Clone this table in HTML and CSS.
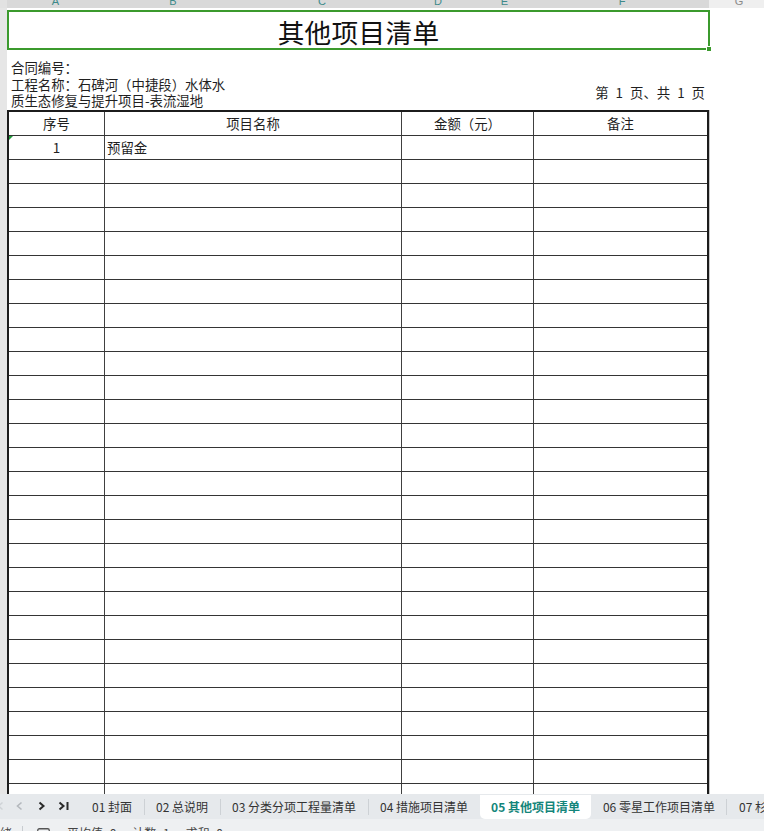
FILE: index.html
```html
<!DOCTYPE html>
<html lang="zh-CN">
<head>
<meta charset="utf-8">
<title>其他项目清单</title>
<link rel="stylesheet" href="styles.css">
</head>
<body>
<div class="app">
  <div class="colhdr">
    <div class="corner"></div>
    <div class="c ca"><span>A</span></div>
    <div class="c cb"><span>B</span></div>
    <div class="c cc"><span>C</span></div>
    <div class="c cd"><span>D</span></div>
    <div class="c ce"><span>E</span></div>
    <div class="c cf"><span>F</span></div>
    <div class="c cg"><span>G</span></div>
  </div>
  <div class="sheet">
    <div class="rowhdr"></div>
    <div class="content">
      <div class="title">其他项目清单<span class="handle"></span></div>
      <div class="meta1">合同编号：</div>
      <div class="meta2">
        <div class="proj">工程名称：石碑河（中捷段）水体水<br>质生态修复与提升项目-表流湿地</div>
        <div class="page">第 1 页、共 1 页</div>
      </div>
      <div class="grid">
        <div class="row head"><div>序号</div><div>项目名称</div><div>金额（元）</div><div>备注</div></div>
        <div class="row"><div class="num mark">1</div><div class="name">预留金</div><div></div><div></div></div>
        <div class="row"><div></div><div></div><div></div><div></div></div>
        <div class="row"><div></div><div></div><div></div><div></div></div>
        <div class="row"><div></div><div></div><div></div><div></div></div>
        <div class="row"><div></div><div></div><div></div><div></div></div>
        <div class="row"><div></div><div></div><div></div><div></div></div>
        <div class="row"><div></div><div></div><div></div><div></div></div>
        <div class="row"><div></div><div></div><div></div><div></div></div>
        <div class="row"><div></div><div></div><div></div><div></div></div>
        <div class="row"><div></div><div></div><div></div><div></div></div>
        <div class="row"><div></div><div></div><div></div><div></div></div>
        <div class="row"><div></div><div></div><div></div><div></div></div>
        <div class="row"><div></div><div></div><div></div><div></div></div>
        <div class="row"><div></div><div></div><div></div><div></div></div>
        <div class="row"><div></div><div></div><div></div><div></div></div>
        <div class="row"><div></div><div></div><div></div><div></div></div>
        <div class="row"><div></div><div></div><div></div><div></div></div>
        <div class="row"><div></div><div></div><div></div><div></div></div>
        <div class="row"><div></div><div></div><div></div><div></div></div>
        <div class="row"><div></div><div></div><div></div><div></div></div>
        <div class="row"><div></div><div></div><div></div><div></div></div>
        <div class="row"><div></div><div></div><div></div><div></div></div>
        <div class="row"><div></div><div></div><div></div><div></div></div>
        <div class="row"><div></div><div></div><div></div><div></div></div>
        <div class="row"><div></div><div></div><div></div><div></div></div>
        <div class="row"><div></div><div></div><div></div><div></div></div>
        <div class="row"><div></div><div></div><div></div><div></div></div>
        <div class="row"><div></div><div></div><div></div><div></div></div>
      </div>
    </div>
  </div>
  <div class="tabs">
    <svg class="nav" width="81" height="25" viewBox="0 0 81 25">
      <polyline points="2.5,8.5 -1.5,12 2.5,15.5" fill="none" stroke="#cfd3d7" stroke-width="1.5"/>
      <polyline points="21.5,8.5 17.5,12 21.5,15.5" fill="none" stroke="#b4b8bd" stroke-width="1.6"/>
      <polyline points="39.5,8.5 43.5,12 39.5,15.5" fill="none" stroke="#2b2b2b" stroke-width="2"/>
      <polyline points="59.5,8.5 63.5,12 59.5,15.5" fill="none" stroke="#2b2b2b" stroke-width="2"/>
      <line x1="67.5" y1="8" x2="67.5" y2="16" stroke="#2b2b2b" stroke-width="2"/>
    </svg>
    <div class="tab">01 封面</div><span class="sep"></span>
    <div class="tab">02 总说明</div><span class="sep"></span>
    <div class="tab">03 分类分项工程量清单</div><span class="sep"></span>
    <div class="tab">04 措施项目清单</div>
    <div class="tab active">05 其他项目清单</div>
    <div class="tab">06 零星工作项目清单</div><span class="sep"></span>
    <div class="tab">07 杉</div>
  </div>
  <div class="status">
    <span class="st-ready">就绪</span>
    <span class="st-sep"></span>
    <svg class="st-icon" width="13" height="12" viewBox="0 0 13 12"><rect x="0.75" y="0.75" width="11.5" height="11" rx="1.5" fill="none" stroke="#555" stroke-width="1.3"/></svg>
    <span class="st-sum first">平均值=0</span>
    <span class="st-sum">计数=1</span>
    <span class="st-sum">求和=0</span>
  </div>
</div>
</body>
</html>
```
FILE: styles.css
```css
* { box-sizing: border-box; }
html, body { margin: 0; padding: 0; }
body {
  width: 764px;
  height: 831px;
  overflow: hidden;
  background: #fff;
  font-family: "Noto Sans CJK SC", "Liberation Sans", sans-serif;
  color: #1f1f1f;
}
.app { display: flex; flex-direction: column; height: 831px; }

/* column header */
.colhdr {
  display: flex;
  height: 8px;
  flex: none;
  overflow: hidden;
  font-family: "Liberation Sans", sans-serif;
  font-size: 11px;
  background: #efefef;
}
.corner { width: 7px; flex: none; background: #e2e2e2; }
.c { flex: none; text-align: center; background: #d9d9d9; color: #3d8a8a; line-height: 11px; }
.c span { display: block; margin-top: -4px; }
.ca { width: 97px; }
.cb { width: 138px; }
.cc { width: 160px; }
.cd { width: 72px; }
.ce { width: 61px; }
.cf { width: 174px; }
.cg { width: 60px; background: #efefef; color: #8a8a8a; }

/* sheet */
.sheet { display: flex; height: 786px; flex: none; overflow: hidden; }
.rowhdr { width: 7px; flex: none; background: #e6e6e6; }
.content { flex: 1; overflow: hidden; }

.title {
  position: relative;
  margin-top: 2px;
  width: 703px;
  height: 40px;
  border: 2px solid #3b9a2d;
  display: flex;
  align-items: center;
  justify-content: center;
  padding-top: 3px;
  font-size: 26.67px;
  color: #111;
  letter-spacing: 0.3px;
}
.handle {
  position: absolute;
  right: -4px;
  bottom: -4px;
  width: 6px;
  height: 6px;
  background: #3b9a2d;
  border: 1px solid #fff;
}

.meta1 {
  margin-top: 8px;
  padding-left: 4px;
  font-size: 13.4px;
  line-height: 18px;
}
.meta2 {
  display: flex;
  justify-content: space-between;
  align-items: center;
  width: 702px;
  padding: 0 4px;
  font-size: 13.4px;
  line-height: 16px;
}
.page { word-spacing: 4px; }

/* table */
.grid {
  margin-top: 2px;
  width: 702px;
  border: 2px solid #1c1c1c;
  box-shadow: 1px 0 0 #c6c6c6;
}
.row {
  display: grid;
  grid-template-columns: 96px 297px 132px 173px;
  height: 24px;
  border-bottom: 1px solid #353535;
}
.row > div {
  border-right: 1px solid #404040;
  font-size: 13.4px;
  line-height: 23px;
}
.row > div:last-child { border-right: none; }
.head > div { text-align: center; }
.num { text-align: center; }
.name { padding-left: 2px; }
.mark { position: relative; }
.mark::before {
  content: "";
  position: absolute;
  left: 0;
  top: 0;
  border-top: 4px solid #1f9a3a;
  border-right: 4px solid transparent;
}

/* sheet tabs */
.tabs {
  height: 25px;
  flex: none;
  display: flex;
  align-items: center;
  background: #e6e9ec;
  font-size: 12px;
  color: #333;
  white-space: nowrap;
  overflow: hidden;
}
.nav { flex: none; display: block; margin-right: -0.5px; }
.tab { flex: none; padding: 0 11.5px; line-height: 25px; }
.tab.active {
  align-self: stretch;
  margin-top: 1px;
  background: #fff;
  color: #13857a;
  font-weight: 700;
  border-radius: 0 0 5px 5px;
  line-height: 24px;
}
.sep { flex: none; width: 1px; height: 16px; background: #cdd1d5; }

/* status bar */
.status {
  flex: 1;
  display: flex;
  align-items: flex-start;
  padding-top: 7px;
  background: #eef0f2;
  font-size: 12px;
  line-height: 14px;
  color: #444;
  white-space: nowrap;
  overflow: hidden;
}
.st-ready { margin-left: -12px; flex: none; }
.st-sep { flex: none; margin-left: 10px; width: 1px; height: 14px; background: #c8ccd0; }
.st-icon { flex: none; margin-left: 14px; margin-top: 2px; display: block; }
.st-sum { flex: none; margin-left: 16px; }
.st-sum.first { margin-left: 17px; }
```
